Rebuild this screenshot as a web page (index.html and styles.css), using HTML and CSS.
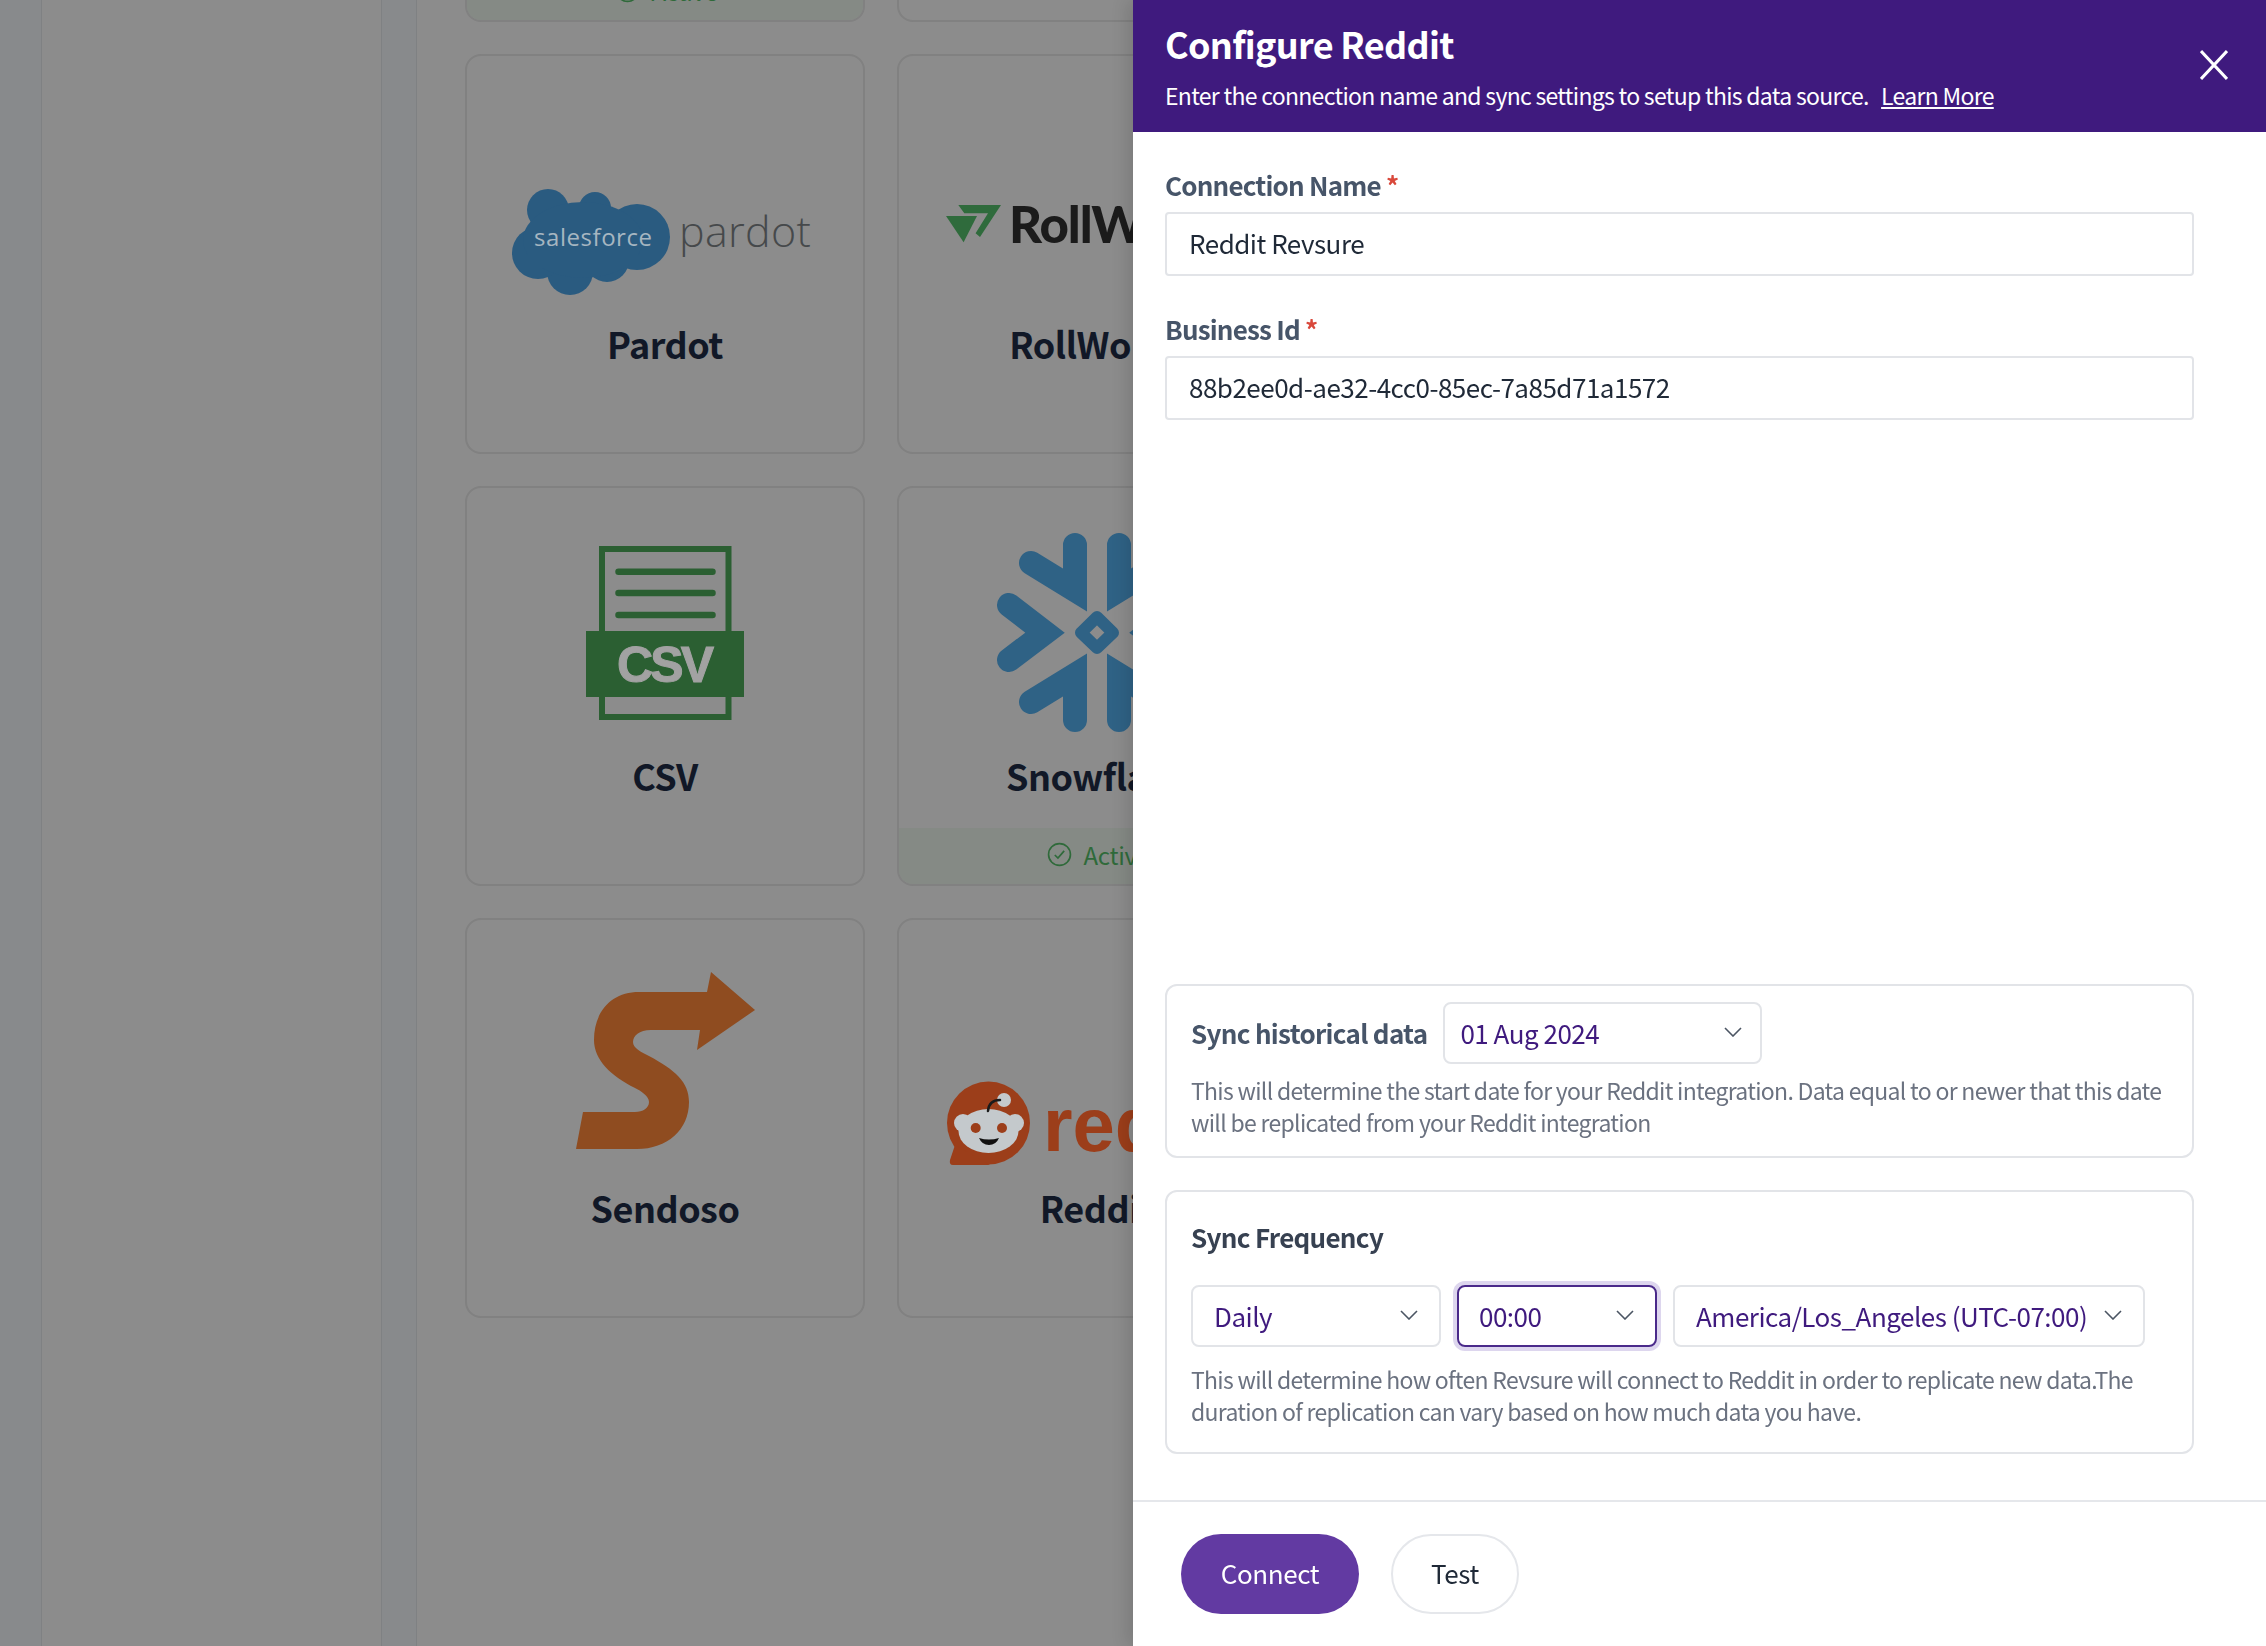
FILE: index.html
```html
<!DOCTYPE html>
<html lang="en">
<head>
    <meta charset="UTF-8">
    <title>Configure Reddit</title>
    <link rel="stylesheet" href="styles.css">
</head>
<body>

<!-- Page behind the drawer, dimmed -->
<div class="page">
    <div class="rail"></div>
    <div class="sidebar"></div>
    <div class="rail rail-wide"></div>
    <main class="main">
        <div class="grid">
            <div class="card">
                <div class="card-status">
                    <svg class="status-icon" viewBox="0 0 24 24"><circle cx="12" cy="12" r="10.5"/><path d="M7.5 12.5l3 3 6-7"/></svg>
                    Active
                </div>
            </div>
            <div class="card"></div>

            <div class="card">
                <svg class="card-logo" viewBox="2 2 396 262">
                    <g class="cloud">
                        <circle cx="83" cy="156" r="21"/>
                        <circle cx="130" cy="154" r="16"/>
                        <circle cx="172" cy="183" r="33"/>
                        <circle cx="142" cy="206" r="22"/>
                        <circle cx="105" cy="218" r="23"/>
                        <circle cx="73" cy="199" r="26"/>
                        <ellipse cx="118" cy="186" rx="60" ry="38"/>
                    </g>
                    <text class="logo-sf" x="69" y="192" textLength="118">salesforce</text>
                    <text class="logo-pardot" x="214" y="193" textLength="132">pardot</text>
                </svg>
                <div class="card-name">Pardot</div>
            </div>
            <div class="card">
                <svg class="card-logo" viewBox="2 2 396 262">
                    <polygon class="rw-mark" points="49,162 80,162 66.6,188.3"/>
                    <polygon class="rw-mark" points="61.3,151 104,151 83,183 78.6,179.3 91,159.3 67.3,159.3"/>
                    <text class="logo-rw" x="112" y="188.5">RollWorks</text>
                </svg>
                <div class="card-name">RollWorks</div>
            </div>

            <div class="card">
                <svg class="card-logo" viewBox="2 2 396 262">
                    <rect class="csv-page" x="137" y="63" width="126.5" height="168"/>
                    <line class="csv-line" x1="153.5" y1="85.7" x2="247.5" y2="85.7"/>
                    <line class="csv-line" x1="153.5" y1="107" x2="247.5" y2="107"/>
                    <line class="csv-line" x1="153.5" y1="129" x2="247.5" y2="129"/>
                    <rect class="csv-band" x="121" y="145" width="158" height="66"/>
                    <text class="csv-text" x="152" y="196" textLength="97">CSV</text>
                </svg>
                <div class="card-name">CSV</div>
            </div>
            <div class="card">
                <svg class="card-logo" viewBox="2 2 396 262">
                    <g class="flake">
                        <polyline points="178,59 178,104 134,77"/>
                        <polyline points="222,59 222,104 266,77"/>
                        <polyline points="178,234 178,189 134,216"/>
                        <polyline points="222,234 222,189 266,216"/>
                        <polyline points="112,119 148,146.7 112,174"/>
                        <polyline points="288,119 252,146.7 288,174"/>
                    </g>
                    <polygon class="flake-core" points="200,131 216,146.7 200,162 184,146.7"/>
                </svg>
                <div class="card-name">Snowflake</div>
                <div class="card-status">
                    <svg class="status-icon" viewBox="0 0 24 24"><circle cx="12" cy="12" r="10.5"/><path d="M7.5 12.5l3 3 6-7"/></svg>
                    Active
                </div>
            </div>

            <div class="card">
                <svg class="card-logo" viewBox="2 2 396 262">
                    <g transform="translate(-466 -918)">
                        <path class="sendoso" d="M712 972 L756 1010 L698 1050 L701 1030 L652 1030 C640 1030 634 1036 634 1042 C634 1048 642 1052 650 1056 C676 1070 690 1082 690 1102 C690 1130 668 1149 638 1149 L577 1149 L584 1112 L636 1112 C644 1112 650 1108 650 1102 C650 1096 642 1091 636 1088 C612 1076 595 1060 595 1040 C595 1012 612 992 640 992 L708 992 Z"/>
                    </g>
                </svg>
                <div class="card-name">Sendoso</div>
            </div>
            <div class="card">
                <svg class="card-logo" viewBox="2 2 396 262">
                    <g transform="translate(-897 -918)">
                        <circle class="rd-orange" cx="988.5" cy="1123" r="41.5"/>
                        <path class="rd-orange" d="M955 1145 L950 1160 Q949 1165 953 1165 L990 1165 Z"/>
                        <circle class="rd-face" cx="963" cy="1123" r="9"/>
                        <circle class="rd-face" cx="1015" cy="1123" r="9"/>
                        <ellipse class="rd-face" cx="988.5" cy="1131" rx="30" ry="22"/>
                        <circle class="rd-face" cx="1004" cy="1100" r="7"/>
                        <path class="rd-stalk" d="M988 1111 Q989 1100 1000 1100"/>
                        <circle class="rd-orange" cx="975.7" cy="1128" r="5"/>
                        <circle class="rd-orange" cx="1002" cy="1128" r="5"/>
                        <path class="rd-mouth" d="M979 1138 Q989 1141 999 1138 Q996 1145 989 1145 Q982 1145 979 1138 Z"/>
                        <text class="logo-rd" x="1043" y="1151">reddit</text>
                    </g>
                </svg>
                <div class="card-name">Reddit</div>
            </div>
        </div>
    </main>
</div>

<!-- Drawer -->
<aside class="drawer">
    <header class="drawer-head">
        <div>
            <h1>Configure Reddit</h1>
            <p>Enter the connection name and sync settings to setup this data source. <a href="#">Learn More</a></p>
        </div>
        <svg class="close" viewBox="0 0 28 30"><path d="M1 1l26 28M27 1L1 29"/></svg>
    </header>

    <div class="drawer-body">
        <div class="fields">
            <div class="field">
                <label for="connName">Connection Name <span class="req">*</span></label>
                <input id="connName" type="text" value="Reddit Revsure">
            </div>
            <div class="field">
                <label for="bizId">Business Id <span class="req">*</span></label>
                <input id="bizId" type="text" value="88b2ee0d-ae32-4cc0-85ec-7a85d71a1572">
            </div>
        </div>

        <div class="sync-boxes">
            <section class="box box-history">
                <div class="box-row">
                    <span class="box-label">Sync historical data</span>
                    <div class="select select-date">01 Aug 2024
                        <svg class="chev" viewBox="0 0 18 10"><path d="M1 1l8 8 8-8"/></svg>
                    </div>
                </div>
                <p class="box-note">This will determine the start date for your Reddit integration. Data equal to or newer that this date will be replicated from your Reddit integration</p>
            </section>

            <section class="box box-freq">
                <div class="box-title">Sync Frequency</div>
                <div class="select-row">
                    <div class="select select-period">Daily
                        <svg class="chev" viewBox="0 0 18 10"><path d="M1 1l8 8 8-8"/></svg>
                    </div>
                    <div class="select select-time">00:00
                        <svg class="chev" viewBox="0 0 18 10"><path d="M1 1l8 8 8-8"/></svg>
                    </div>
                    <div class="select select-zone">America/Los_Angeles (UTC-07:00)
                        <svg class="chev" viewBox="0 0 18 10"><path d="M1 1l8 8 8-8"/></svg>
                    </div>
                </div>
                <p class="box-note">This will determine how often Revsure will connect to Reddit in order to replicate new data.The duration of replication can vary based on how much data you have.</p>
            </section>
        </div>
    </div>

    <footer class="drawer-foot">
        <button class="btn btn-primary">Connect</button>
        <button class="btn btn-plain">Test</button>
    </footer>
</aside>

</body>
</html>
```

FILE: styles.css
```css
* {
    box-sizing: border-box;
}

html, body {
    margin: 0;
    height: 100%;
    overflow: hidden;
}

body {
    font-family: "Noto Sans CJK SC", "Noto Sans", sans-serif;
    background: #8c8c8c;
}

/* Dimmed page */
.page {
    display: flex;
    height: 100vh;
}

.rail {
    width: 41px;
    background: #888a8c;
}

.rail-wide {
    width: 34px;
}

.sidebar {
    width: 341px;
    background: #8c8c8c;
    border-left: 1px solid #7f8183;
    border-right: 1px solid #7f8183;
}

.main {
    flex: 1;
    overflow: hidden;
    padding-left: 48px;
    border-left: 1px solid #7f8183;
}

.grid {
    display: grid;
    grid-template-columns: repeat(2, 400px);
    grid-auto-rows: 400px;
    gap: 32px;
    margin-top: -378px;
}

.card {
    display: flex;
    flex-direction: column;
    border: 2px solid #818181;
    border-radius: 16px;
    overflow: hidden;
}

.card-logo {
    display: block;
    width: 396px;
    height: 262px;
    flex: none;
}

.card-name {
    height: 52px;
    line-height: 50px;
    text-align: center;
    font-size: 36px;
    font-weight: 600;
    letter-spacing: -0.5px;
    color: #111827;
}

.card-status {
    margin-top: auto;
    height: 56px;
    padding: 0 0 3px 3px;
    display: flex;
    align-items: center;
    justify-content: center;
    gap: 11px;
    background: #858a85;
    color: #2f6a3a;
    font-size: 24px;
    letter-spacing: -0.3px;
}

.status-icon {
    width: 25px;
    height: 25px;
    fill: none;
    stroke: #2f6a3a;
    stroke-width: 1.6;
}

/* Logos */
.cloud {
    fill: #2a5b80;
}

.logo-sf {
    font-family: "Open Sans", sans-serif;
    font-size: 24px;
    fill: #a6b6c1;
}

.logo-pardot {
    font-family: "Open Sans", sans-serif;
    font-weight: 300;
    font-size: 43px;
    fill: #46494b;
}

.rw-mark {
    fill: #2f6b3c;
}

.logo-rw {
    font-family: "Lato", sans-serif;
    font-weight: 900;
    font-size: 51px;
    letter-spacing: -1px;
    fill: #1b1b1b;
}

.csv-page {
    fill: none;
    stroke: #2b5f32;
    stroke-width: 6;
}

.csv-line {
    stroke: #2b5f32;
    stroke-width: 6.5;
    stroke-linecap: round;
}

.csv-band {
    fill: #2b5f32;
}

.csv-text {
    font-family: "Liberation Sans", sans-serif;
    font-weight: 700;
    font-size: 50px;
    fill: #a2a2a2;
    stroke: #a2a2a2;
    stroke-width: 1;
}

.flake polyline {
    fill: none;
    stroke: #2f6285;
    stroke-width: 24;
    stroke-linecap: round;
    stroke-linejoin: miter;
}

.flake-core {
    fill: none;
    stroke: #2f6285;
    stroke-width: 12;
    stroke-linejoin: round;
}

.sendoso {
    fill: #8f4c20;
}

.rd-orange {
    fill: #9c3e1a;
}

.rd-face {
    fill: #c4c9cc;
}

.rd-stalk {
    fill: none;
    stroke: #1a1a1a;
    stroke-width: 2.5;
    stroke-linecap: round;
}

.rd-mouth {
    fill: #111;
}

.logo-rd {
    font-family: "Liberation Sans", sans-serif;
    font-weight: 700;
    font-size: 76px;
    fill: #9c3e1a;
}

/* Drawer */
.drawer {
    position: fixed;
    top: 0;
    right: 0;
    bottom: 0;
    width: 1133px;
    display: flex;
    flex-direction: column;
    background: #fff;
    box-shadow: -6px 0 16px rgba(0, 0, 0, 0.12);
}

.drawer-head {
    height: 132px;
    flex: none;
    display: flex;
    justify-content: space-between;
    align-items: flex-start;
    padding: 19px 38px 0 32px;
    background: #3f1a7e;
    color: #fff;
}

.drawer-head h1 {
    margin: 0;
    font-size: 36px;
    line-height: 48px;
    font-weight: 600;
    letter-spacing: -0.7px;
}

.drawer-head p {
    margin: 11px 0 0;
    font-size: 23px;
    line-height: 34px;
    letter-spacing: -0.7px;
}

.drawer-head a {
    color: #fff;
    margin-left: 8px;
}

.close {
    width: 28px;
    height: 30px;
    margin-top: 31px;
    fill: none;
    stroke: #fff;
    stroke-width: 3;
}

.drawer-body {
    flex: 1;
    display: flex;
    flex-direction: column;
    justify-content: space-between;
    padding: 34px 72px 46px 32px;
}

.field {
    margin-bottom: 34px;
}

.field label {
    display: block;
    height: 46px;
    line-height: 38px;
    font-size: 26px;
    font-weight: 600;
    letter-spacing: -0.8px;
    color: #475569;
}

.req {
    color: #d9483b;
}

.field input {
    display: block;
    width: 100%;
    height: 64px;
    padding: 0 22px 4px;
    border: 2px solid #e2e4e8;
    border-radius: 4px;
    font-family: inherit;
    font-size: 26px;
    letter-spacing: -0.5px;
    color: #1f2937;
    outline: none;
}

.sync-boxes {
    display: flex;
    flex-direction: column;
    gap: 32px;
}

.box {
    border: 2px solid #e2e4e8;
    border-radius: 12px;
    padding: 0 24px;
}

.box-history {
    height: 174px;
    padding-top: 16px;
}

.box-freq {
    height: 264px;
    padding-top: 25px;
}

.box-row {
    display: flex;
    align-items: center;
    gap: 16px;
}

.box-label,
.box-title {
    padding-bottom: 2px;
    font-size: 26px;
    font-weight: 600;
    letter-spacing: -0.7px;
    color: #475569;
}

.box-title {
    line-height: 40px;
    color: #374151;
}

.select {
    height: 62px;
    display: flex;
    align-items: center;
    justify-content: space-between;
    padding-bottom: 2px;
    border: 2px solid #e2e4e8;
    border-radius: 8px;
    font-size: 26px;
    letter-spacing: -0.5px;
    white-space: nowrap;
    color: #3f1a7e;
}

.select-date {
    width: 319px;
    padding-left: 15px;
    padding-right: 18px;
}

.select-row {
    display: flex;
    gap: 16px;
    margin-top: 26px;
}

.select-period {
    width: 250px;
    padding-left: 21px;
    padding-right: 21px;
}

.select-time {
    width: 200px;
    padding-left: 20px;
    padding-right: 21px;
    border-color: #4a2a8a;
    box-shadow: 0 0 0 4px #ddd6ee;
}

.select-zone {
    width: 472px;
    padding-left: 21px;
    padding-right: 21px;
}

.chev {
    width: 18px;
    height: 10px;
    fill: none;
    stroke: #4b5563;
    stroke-width: 1.6;
}

.box-note {
    margin: 10px 0 0;
    font-size: 23px;
    line-height: 32px;
    letter-spacing: -0.7px;
    color: #6b7280;
}

.box-freq .box-note {
    margin-top: 16px;
}

.drawer-foot {
    height: 146px;
    flex: none;
    display: flex;
    gap: 32px;
    padding: 32px 48px 0;
    border-top: 2px solid #e5e7eb;
}

.btn {
    height: 80px;
    padding-bottom: 4px;
    border-radius: 40px;
    font-family: inherit;
    font-size: 26px;
    letter-spacing: -0.4px;
}

.btn-primary {
    width: 178px;
    border: none;
    background: #623aa2;
    color: #fff;
}

.btn-plain {
    width: 128px;
    border: 2px solid #e5e7eb;
    background: #fff;
    color: #1f2937;
}
```
